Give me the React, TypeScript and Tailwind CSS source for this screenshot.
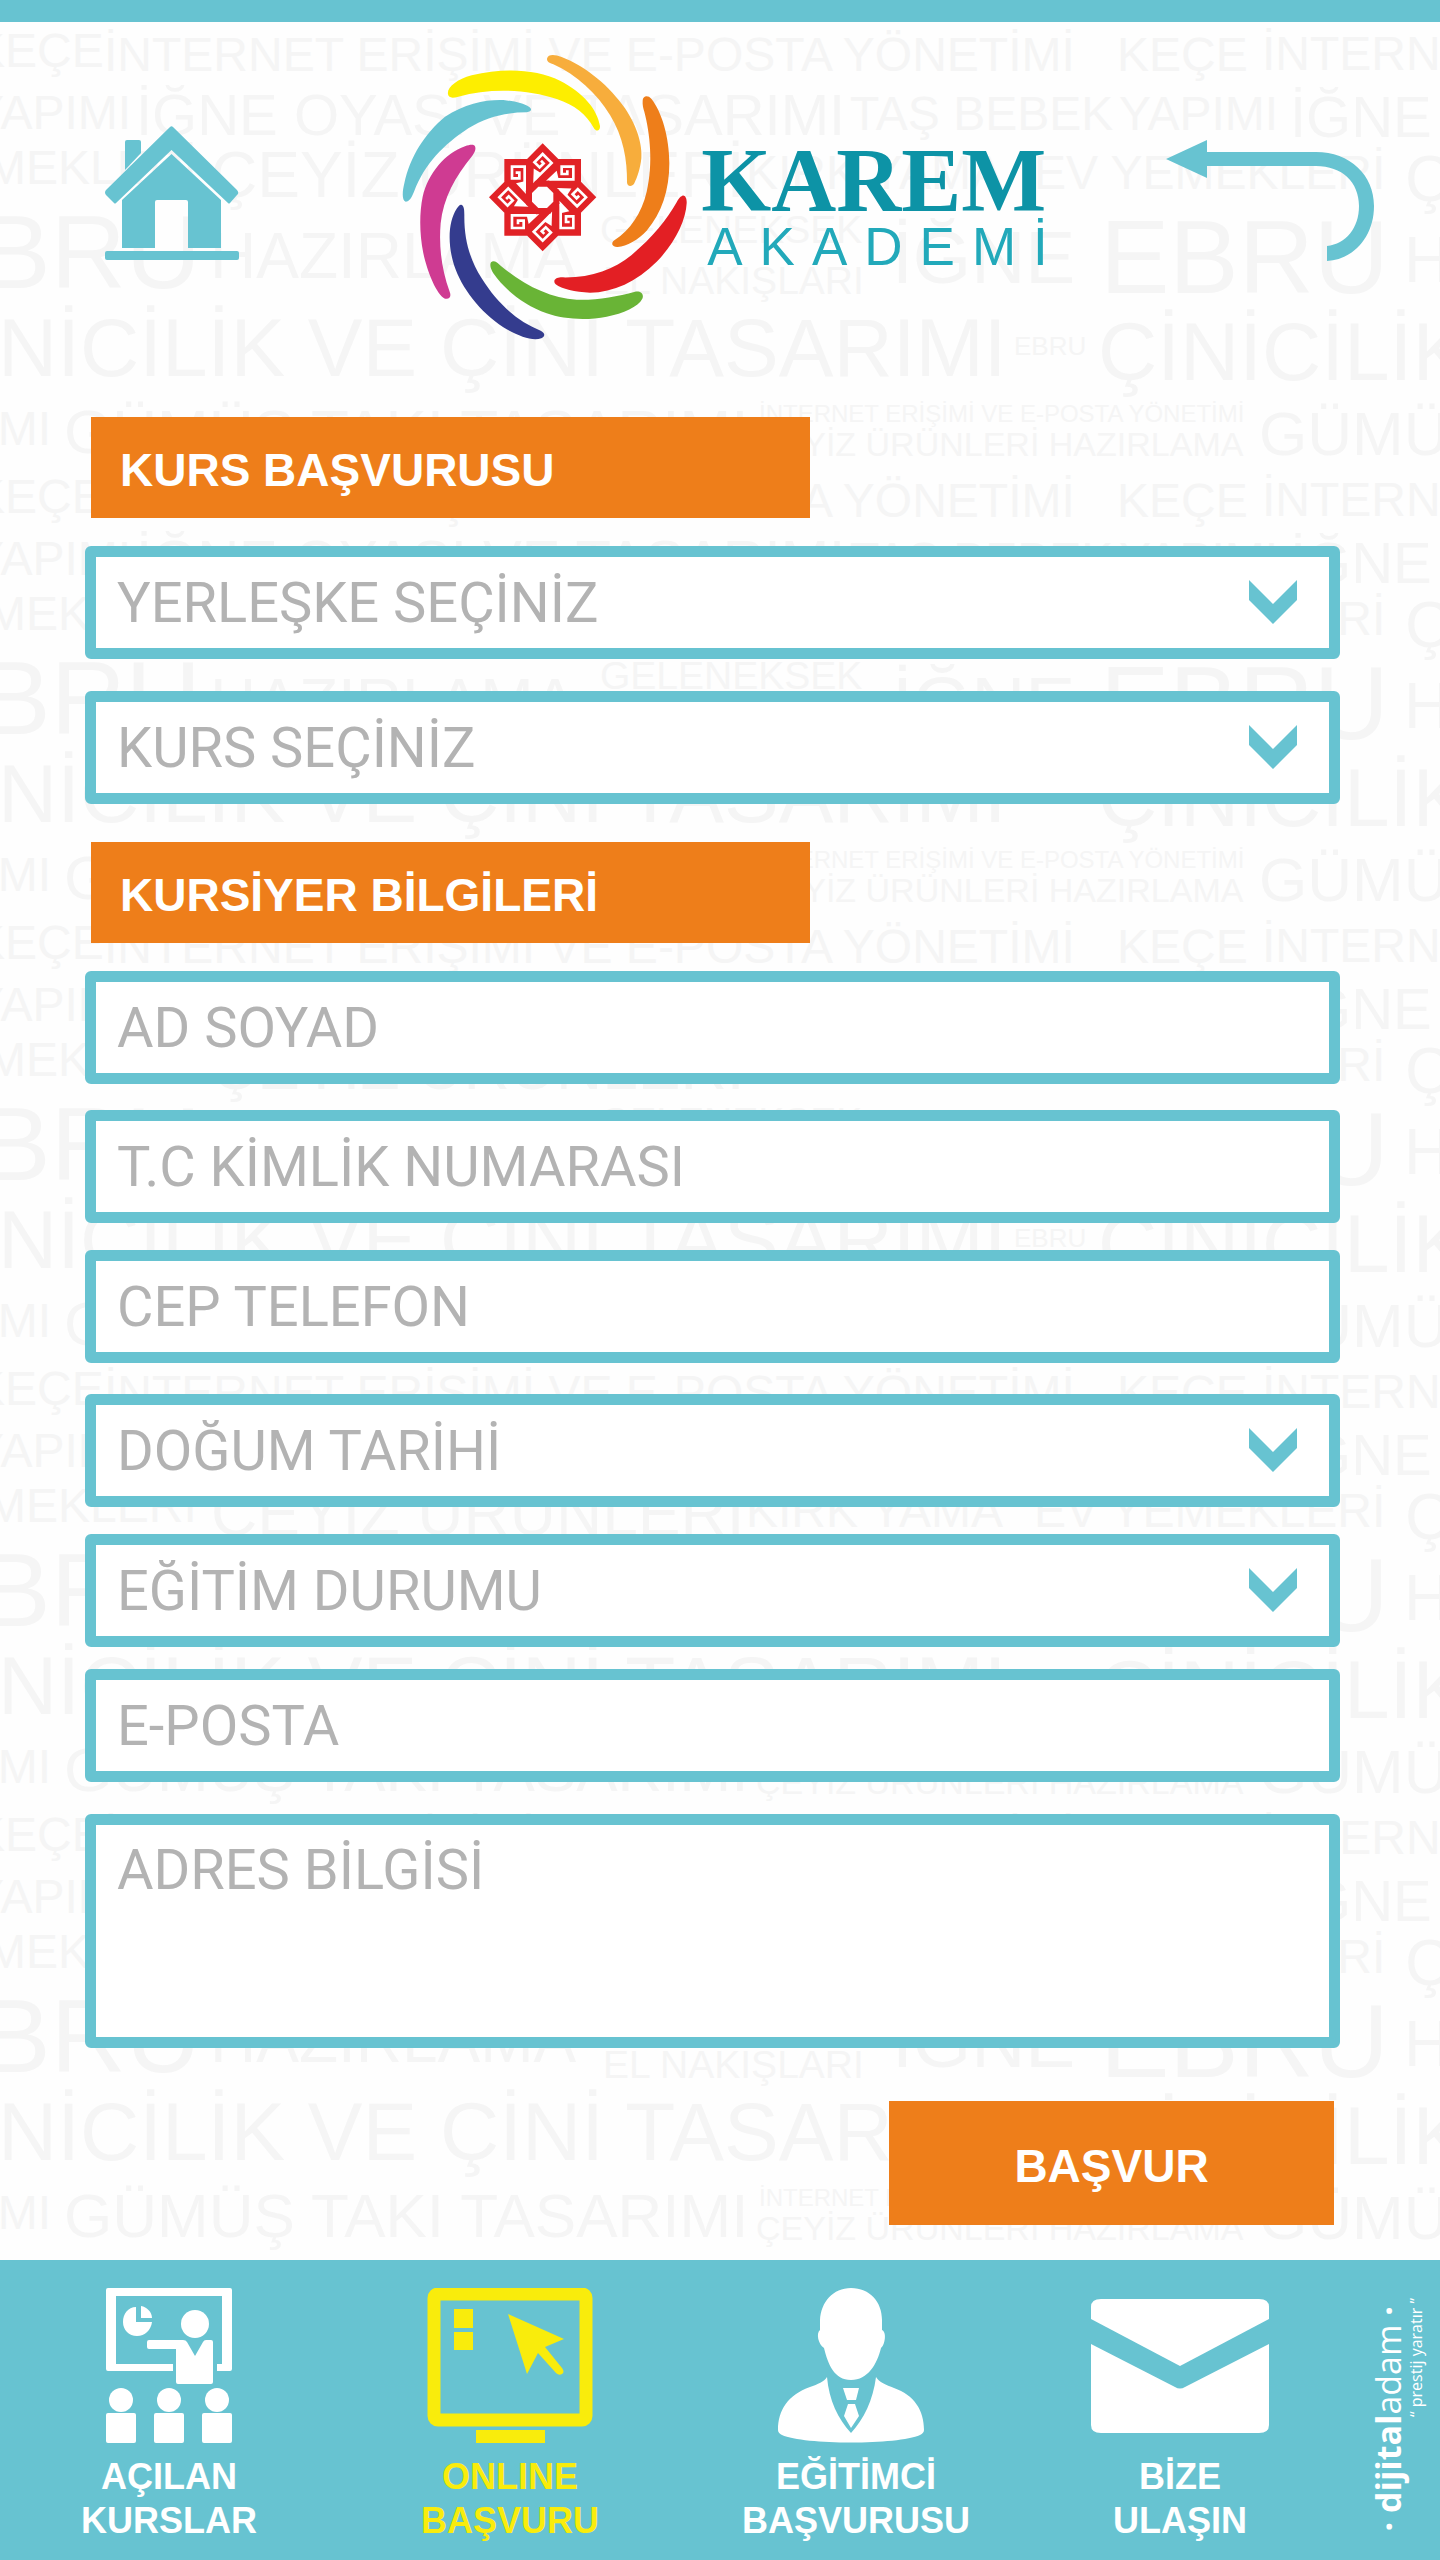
import React from "react";

const words: { text: string; place: string }[] = [
  { text: "KEÇE", place: "left-[-27px] top-[5px] text-[48px]" },
  { text: "İNTERNET ERİŞİMİ VE E-POSTA YÖNETİMİ", place: "left-[104px] top-[9px] text-[48px]" },
  { text: "KEÇE", place: "left-[1117px] top-[9px] text-[48px]" },
  { text: "İNTERNET", place: "left-[1262px] top-[8px] text-[48px]" },
  { text: "YAPIMI", place: "left-[-28px] top-[67px] text-[48px]" },
  { text: "İĞNE OYASI VE TASARIMI", place: "left-[136px] top-[64px] text-[58px]" },
  { text: "TAŞ BEBEK", place: "left-[850px] top-[68px] text-[48px]" },
  { text: "YAPIMI", place: "left-[1119px] top-[68px] text-[48px]" },
  { text: "İĞNE", place: "left-[1290px] top-[66px] text-[58px]" },
  { text: "YEMEKLERİ", place: "left-[-78px] top-[122px] text-[48px]" },
  { text: "ÇEYİZ ÜRÜNLERİ", place: "left-[211px] top-[121px] text-[64px]" },
  { text: "KIRK YAMA", place: "left-[746px] top-[127px] text-[48px]" },
  { text: "EV YEMEKLERİ", place: "left-[1034px] top-[127px] text-[48px]" },
  { text: "ÇEYİZ", place: "left-[1405px] top-[125px] text-[64px]" },
  { text: "EBRU", place: "left-[-88px] top-[178px] text-[104px]" },
  { text: "HAZIRLAMA", place: "left-[210px] top-[202px] text-[64px]" },
  { text: "GELENEKSEK", place: "left-[600px] top-[188px] text-[39px]" },
  { text: "EL NAKIŞLARI", place: "left-[603px] top-[239px] text-[39px]" },
  { text: "İĞNE", place: "left-[892px] top-[198px] text-[75px]" },
  { text: "EBRU", place: "left-[1100px] top-[183px] text-[104px]" },
  { text: "HAZIRLAMA", place: "left-[1404px] top-[206px] text-[64px]" },
  { text: "ÇİNİCİLİK VE ÇİNİ TASARIMI", place: "left-[-84px] top-[285px] text-[82px]" },
  { text: "EBRU", place: "left-[1014px] top-[311px] text-[26px]" },
  { text: "ÇİNİCİLİK", place: "left-[1098px] top-[289px] text-[82px]" },
  { text: "YAPIMI", place: "left-[-108px] top-[383px] text-[48px]" },
  { text: "GÜMÜŞ TAKI TASARIMI", place: "left-[64px] top-[379px] text-[62px]" },
  { text: "İNTERNET ERİŞİMİ VE E-POSTA YÖNETİMİ", place: "left-[759px] top-[380px] text-[24px]" },
  { text: "ÇEYİZ ÜRÜNLERİ HAZIRLAMA", place: "left-[756px] top-[405px] text-[34px]" },
  { text: "GÜMÜŞ", place: "left-[1259px] top-[381px] text-[62px]" },
];

function Watermark() {
  return (
    <div aria-hidden="true" className="pointer-events-none absolute inset-0 overflow-hidden select-none">
      {[0, 1, 2, 3, 4].map((tile) => (
        <div key={tile} className="relative h-[446px] leading-none text-[#f5f5f5]">
          {words.map((w, i) => (
            <span key={i} className={`absolute whitespace-nowrap ${w.place}`}>
              {w.text}
            </span>
          ))}
        </div>
      ))}
    </div>
  );
}

function HomeIcon() {
  return (
    <svg className="h-[134px] w-[134px]" viewBox="105 126 134 134" fill="#67c3d1">
      <path d="M125 142q0-2 2-2h12q2 0 2 2v11l-16 17z" />
      <path d="M170 127q1.500-1.500 3 0L237 190q2.500 3 0 5L230 203q-1 1-2 0L171.500 150 116 203q-1 1-2 0L106 195q-2-2.500 0-5z" />
      <path d="M171.500 154 221 200V248H188V202q0-2-2-2H157q-2 0-2 2V248H122V200z" />
      <rect x="105" y="251" width="134" height="9" rx="2" />
    </svg>
  );
}

function BackIcon() {
  return (
    <svg className="h-[122px] w-[208px]" viewBox="1166 140 208 122" fill="#67c3d1">
      <path d="M1166 159 1207 140V152H1316C1350 152 1374 175 1374 206C1374 238 1352 260 1327 261V246C1346 244 1359 228 1359 206C1359 182 1342 166 1316 166H1207V178z" />
    </svg>
  );
}

function Emblem() {
  return (
    <svg className="h-[310px] w-[302px] shrink-0" viewBox="0 0 906 930">
      <path fill="#fdee00" d="M174 163C170 143 200 118 245 106C345 82 440 88 510 122C580 158 622 208 630 258C631 275 617 275 611 263C590 225 555 195 500 177C410 147 300 143 205 170C187 175 176 174 174 163Z" />
      <path fill="#f7ad3c" d="M471 56C474 42 494 43 515 51C590 80 660 140 705 205C745 265 757 320 754 355C751 385 742 412 733 430C726 442 711 440 711 427C712 360 700 290 660 225C620 160 560 105 490 73C478 68 471 66 471 56Z" />
      <path fill="#ee7e1a" d="M758 182C758 167 774 164 784 176C815 215 838 290 838 370C838 450 815 520 770 572C745 600 710 618 683 621C667 622 661 610 673 601C720 570 755 520 770 455C790 370 780 280 763 215C760 205 757 195 758 182Z" />
      <path fill="#e31f24" d="M876 468C884 463 891 474 890 490C888 540 855 610 800 665C740 725 670 757 600 758C555 757 515 747 497 733C487 722 497 713 512 712C600 715 670 690 725 645C790 590 830 540 860 487C865 477 870 470 876 468Z" />
      <path fill="#69b436" d="M303 667C311 659 322 668 332 677C400 735 480 775 560 779C620 781 680 770 735 755C752 752 763 762 757 776C745 800 700 820 650 830C590 842 520 838 470 820C400 795 340 745 310 700C303 688 298 675 303 667Z" />
      <path fill="#343c8e" d="M214 494C222 497 223 508 223 525C222 600 240 660 275 715C325 795 385 845 452 872C465 878 467 889 454 895C425 904 385 888 340 862C270 815 215 745 192 675C172 610 175 545 200 506C205 499 209 493 214 494Z" />
      <path fill="#cf3b92" d="M252 316C260 322 256 335 247 347C195 410 160 475 152 550C146 620 155 690 179 755C185 771 178 779 165 776C140 765 112 695 100 640C88 580 88 520 98 470C115 400 165 340 225 319C237 315 246 313 252 316Z" />
      <path fill="#67c3d1" d="M418 201C427 208 424 215 410 217C350 217 290 230 235 265C160 315 105 370 72 455C65 472 58 485 47 485C35 480 37 455 43 430C60 350 105 280 165 230C225 190 290 178 340 180C375 184 400 190 418 201Z" />
      <g transform="translate(458 472)">
        <path fill="#e12226" d="M-115-115H115V115H-115z M0-162 161 0 0 162-161 0z" />
        {[0, 45, 90, 135, 180, 225, 270, 315].map((angle) => (
          <g key={angle} transform={`rotate(${angle})`}>
            <path fill="none" stroke="#fff" strokeWidth="8" d="M-81-74h11v17h-22v-35h38v72" />
            <path fill="#fff" d="M-50-10-80-42-54-48z" />
          </g>
        ))}
        <path fill="#fefefe" d="M-13-32H13L32-13V13L13 32H-13L-32 13V-13z" />
      </g>
    </svg>
  );
}

const fieldBox =
  "block w-full rounded-[6px] border-[11px] border-[#67c3d1] bg-white px-[21px] font-['Roboto'] text-[56px] leading-[66px] text-[#b3b3b3] outline-none placeholder:text-[#b3b3b3] placeholder:opacity-100";

function TextField({ label, gap, type = "text" }: { label: string; gap: string; type?: string }) {
  return (
    <div className={gap}>
      <input type={type} aria-label={label} placeholder={label} className={`h-[113px] ${fieldBox}`} />
    </div>
  );
}

function SelectField({ label, gap }: { label: string; gap: string }) {
  return (
    <div className={`relative ${gap}`}>
      <select aria-label={label} defaultValue="" className={`h-[113px] appearance-none ${fieldBox}`}>
        <option value="">{label}</option>
      </select>
      <svg className="pointer-events-none absolute top-[34px] right-[43px] h-[44px] w-[48px]" viewBox="0 0 48 44" fill="#67c3d1">
        <path d="M0 0 24 24 48 0V20L24 44 0 20z" />
      </svg>
    </div>
  );
}

function SectionTitle({ children, gap }: { children: string; gap: string }) {
  return (
    <h2 className={`ml-[6px] flex h-[101px] w-[57.3%] items-center bg-[#ee7e1a] pt-[4px] pl-[29px] text-[46px] leading-none font-bold text-white ${gap}`}>
      {children}
    </h2>
  );
}

function ClassIcon() {
  return (
    <svg className="h-[155px] w-[126px]" viewBox="0 0 126 155" fill="#fff">
      <path d="M2 0H124q2 0 2 2V81q0 2-2 2H111V76H116V8H10V76H67V83H2q-2 0-2-2V2q0-2 2-2z" />
      <path d="M30 19V34H46C45 42 39 48 31 48C23 48 17 42 17 34C17 26 22 19 30 19z M35 18C41 19 46 24 46 30H35z" />
      <ellipse cx="89" cy="36" rx="14" ry="14" />
      <path d="M43 52H77Q80 52 81 54L89 68 97 54Q98 52 100 52H105Q107 52 107 54V94Q107 96 105 96H72Q70 96 70 94V61H43Q41 61 41 59V54Q41 52 43 52z" />
      {[15, 63, 111].map((x) => (
        <g key={x}>
          <circle cx={x} cy="112" r="12" />
          <rect x={x - 15} y="125" width="30" height="30" rx="2" />
        </g>
      ))}
    </svg>
  );
}

function ScreenIcon() {
  return (
    <svg className="h-[155px] w-[166px]" viewBox="0 0 166 155" fill="#f9ec0c">
      <rect x="7" y="6" width="152" height="126" rx="4" fill="none" stroke="#f9ec0c" strokeWidth="13" />
      <path d="M27 21H46V40H27z M27 44H46V62H27z M49 142H118V155H49z" />
      <path d="M81 26 137 51 118 59 135 80Q138 84 135 86Q132 88 129 85L111 65 100 86z" />
    </svg>
  );
}

function PersonIcon() {
  return (
    <svg className="h-[155px] w-[156px]" viewBox="0 0 156 155" fill="#fff">
      <path d="M73 0C92 0 104 14 104 32V42C109 44 107 57 103 60C99 76 90 92 73 92C56 92 50 76 46 60C40 56 38 45 42 42V32C43 14 55 0 73 0z" />
      <path d="M49 89C51 112 60 131 73 145C86 131 95 112 98 89C101 94 108 97 116 100C136 107 146 122 146 142Q146 145 142 147C120 157 26 157 4 147Q0 145 0 142C0 122 10 107 32 99C40 96 46 94 49 89z" />
      <path d="M65 100H81L78 112H69z M70 116H77L81 128 73 140 66 128z" />
    </svg>
  );
}

function MailIcon() {
  return (
    <svg className="h-[134px] w-[178px]" viewBox="0 0 178 134" fill="#fff">
      <path d="M10 0H168Q178 0 178 8V20L89 67 0 20V8Q0 0 10 0z" />
      <path d="M0 45 84 88Q89 91 94 88L178 45V126Q178 134 168 134H10Q0 134 0 126z" />
    </svg>
  );
}

function NavItem({ icon, lines, tone }: { icon: React.ReactNode; lines: [string, string]; tone: string }) {
  return (
    <a href="#" className={`flex flex-col items-center text-center ${tone}`}>
      <span className="flex h-[155px] items-center">{icon}</span>
      <span className="mt-[12px] text-[36px] leading-[44px] font-bold">
        {lines[0]}
        <br />
        {lines[1]}
      </span>
    </a>
  );
}

export default function App() {
  return (
    <div className="flex min-h-screen flex-col bg-[#fefefe] font-['Liberation_Sans',sans-serif]">
      <div className="h-[22px] bg-[#67c3d1]" />
      <main className="relative flex-1">
        <Watermark />
        <div className="relative">
          <header className="flex h-[395px] items-start pr-[66px] pl-[105px]">
            <a href="#" aria-label="Ana sayfa" className="mt-[104px]">
              <HomeIcon />
            </a>
            <div className="mt-[18px] flex flex-1 justify-center gap-[9px] pl-[50px]">
              <Emblem />
              <div className="pt-[97px]">
                <h1 className="font-['Liberation_Serif'] text-[90px] leading-[88px] font-bold text-[#0d93a6]">KAREM</h1>
                <p className="ml-[6px] text-[53px] leading-[44px] tracking-[17px] text-[#22a9ba]">AKADEMİ</p>
              </div>
            </div>
            <button type="button" aria-label="Geri" className="mt-[118px]">
              <BackIcon />
            </button>
          </header>

          <form className="flex flex-col pr-[100px] pb-[35px] pl-[85px]">
            <SectionTitle gap="mt-0">KURS BAŞVURUSU</SectionTitle>
            <SelectField label="YERLEŞKE SEÇİNİZ" gap="mt-[28px]" />
            <SelectField label="KURS SEÇİNİZ" gap="mt-[32px]" />
            <SectionTitle gap="mt-[38px]">KURSİYER BİLGİLERİ</SectionTitle>
            <TextField label="AD SOYAD" gap="mt-[28px]" />
            <TextField label="T.C KİMLİK NUMARASI" gap="mt-[26px]" />
            <TextField label="CEP TELEFON" gap="mt-[27px]" type="tel" />
            <SelectField label="DOĞUM TARİHİ" gap="mt-[31px]" />
            <SelectField label="EĞİTİM DURUMU" gap="mt-[27px]" />
            <TextField label="E-POSTA" gap="mt-[22px]" type="email" />
            <div className="mt-[32px]">
              <textarea aria-label="ADRES BİLGİSİ" placeholder="ADRES BİLGİSİ" className={`h-[234px] resize-none pt-[12px] ${fieldBox}`} />
            </div>
            <button type="submit" className="mt-[53px] mr-[6px] h-[124px] w-[445px] self-end bg-[#ee7e1a] pt-[6px] text-[46px] font-bold text-white">
              BAŞVUR
            </button>
          </form>
        </div>
      </main>

      <footer className="flex h-[300px] bg-[#67c3d1] pt-[28px]">
        <nav className="grid flex-1 grid-cols-[338fr_344fr_348fr_300fr]">
          <NavItem icon={<ClassIcon />} lines={["AÇILAN", "KURSLAR"]} tone="text-white" />
          <NavItem icon={<ScreenIcon />} lines={["ONLINE", "BAŞVURU"]} tone="text-[#f9ec0c]" />
          <NavItem icon={<PersonIcon />} lines={["EĞİTİMCİ", "BAŞVURUSU"]} tone="text-white" />
          <NavItem icon={<MailIcon />} lines={["BİZE", "ULAŞIN"]} tone="text-white" />
        </nav>
        <div className="flex w-[110px] items-start pt-[10px] pl-[39px] font-['Open_Sans'] text-white">
          <p className="mt-[8px] rotate-180 text-[34px] leading-[38px] whitespace-nowrap [writing-mode:vertical-rl]">
            <b>· dijital</b>adam<b> ·</b>
          </p>
          <p className="rotate-180 text-[16px] leading-[18px] whitespace-nowrap [writing-mode:vertical-rl]">“ prestij yaratır ”</p>
        </div>
      </footer>
    </div>
  );
}
